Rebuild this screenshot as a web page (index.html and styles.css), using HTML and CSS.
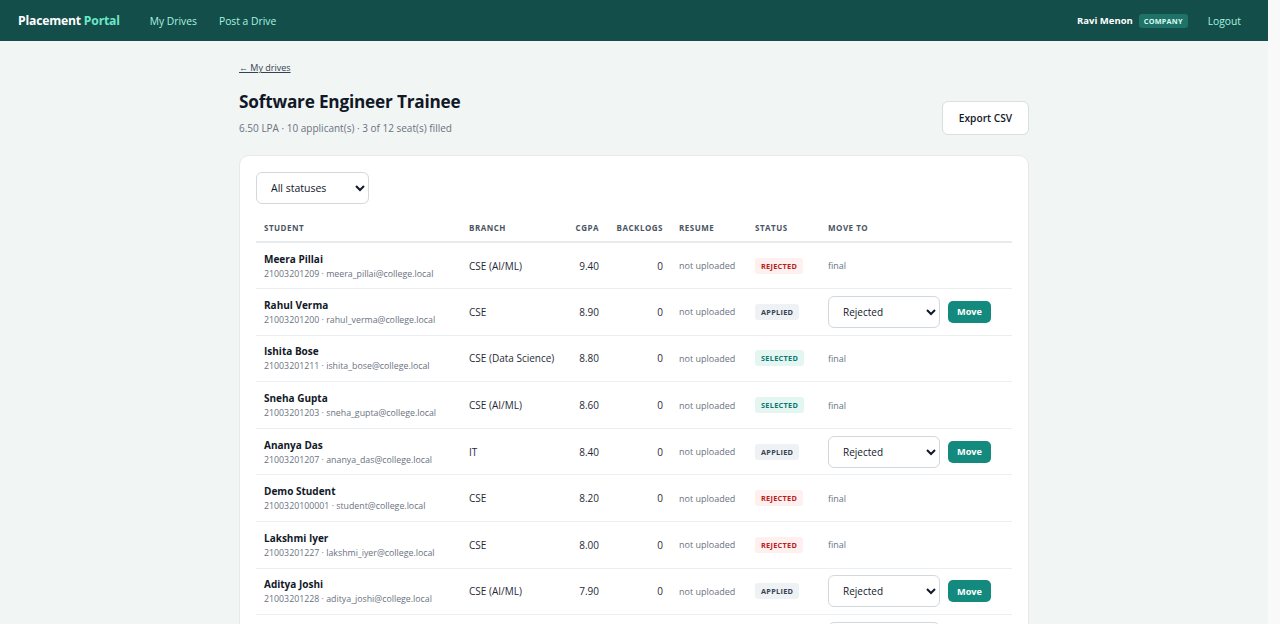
FILE: index.html
```html
<!DOCTYPE html>
<html lang="en">
<head>
<meta charset="utf-8">
<title>Applicants - Placement Portal</title>
<link rel="stylesheet" href="styles.css">
</head>
<body>
<header class="topbar">
  <div class="topbar-left">
    <a class="brand" href="#">Placement <span class="brand-accent">Portal</span></a>
    <nav class="nav">
      <a href="#">My Drives</a>
      <a href="#">Post a Drive</a>
    </nav>
  </div>
  <div class="topbar-right">
    <span class="user-name">Ravi Menon</span>
    <span class="role-badge">COMPANY</span>
    <a class="logout" href="#">Logout</a>
  </div>
</header>

<main class="page">
  <a class="back-link" href="#">← My drives</a>
  <div class="page-head">
    <div>
      <h1 class="title">Software Engineer Trainee</h1>
      <p class="meta">6.50 LPA · 10 applicant(s) · 3 of 12 seat(s) filled</p>
    </div>
    <button class="btn-outline">Export CSV</button>
  </div>

  <section class="card">
    <select class="filter">
      <option>All statuses</option>
    </select>

    <table class="applicants">
      <thead>
        <tr>
          <th class="col-student">Student</th>
          <th class="col-branch">Branch</th>
          <th class="num col-cgpa">CGPA</th>
          <th class="num col-back">Backlogs</th>
          <th class="col-resume">Resume</th>
          <th class="col-status">Status</th>
          <th class="col-move">Move to</th>
        </tr>
      </thead>
      <tbody>
        <tr>
          <td><div class="name">Meera Pillai</div><div class="sub">21003201209 · meera_pillai@college.local</div></td>
          <td>CSE (AI/ML)</td><td class="num">9.40</td><td class="num">0</td>
          <td class="muted">not uploaded</td>
          <td><span class="badge rejected">Rejected</span></td>
          <td class="muted">final</td>
        </tr>
        <tr>
          <td><div class="name">Rahul Verma</div><div class="sub">21003201200 · rahul_verma@college.local</div></td>
          <td>CSE</td><td class="num">8.90</td><td class="num">0</td>
          <td class="muted">not uploaded</td>
          <td><span class="badge applied">Applied</span></td>
          <td><div class="move"><select class="move-select"><option>Rejected</option></select><button class="btn-move">Move</button></div></td>
        </tr>
        <tr>
          <td><div class="name">Ishita Bose</div><div class="sub">21003201211 · ishita_bose@college.local</div></td>
          <td>CSE (Data Science)</td><td class="num">8.80</td><td class="num">0</td>
          <td class="muted">not uploaded</td>
          <td><span class="badge selected">Selected</span></td>
          <td class="muted">final</td>
        </tr>
        <tr>
          <td><div class="name">Sneha Gupta</div><div class="sub">21003201203 · sneha_gupta@college.local</div></td>
          <td>CSE (AI/ML)</td><td class="num">8.60</td><td class="num">0</td>
          <td class="muted">not uploaded</td>
          <td><span class="badge selected">Selected</span></td>
          <td class="muted">final</td>
        </tr>
        <tr>
          <td><div class="name">Ananya Das</div><div class="sub">21003201207 · ananya_das@college.local</div></td>
          <td>IT</td><td class="num">8.40</td><td class="num">0</td>
          <td class="muted">not uploaded</td>
          <td><span class="badge applied">Applied</span></td>
          <td><div class="move"><select class="move-select"><option>Rejected</option></select><button class="btn-move">Move</button></div></td>
        </tr>
        <tr>
          <td><div class="name">Demo Student</div><div class="sub">2100320100001 · student@college.local</div></td>
          <td>CSE</td><td class="num">8.20</td><td class="num">0</td>
          <td class="muted">not uploaded</td>
          <td><span class="badge rejected">Rejected</span></td>
          <td class="muted">final</td>
        </tr>
        <tr>
          <td><div class="name">Lakshmi Iyer</div><div class="sub">21003201227 · lakshmi_iyer@college.local</div></td>
          <td>CSE</td><td class="num">8.00</td><td class="num">0</td>
          <td class="muted">not uploaded</td>
          <td><span class="badge rejected">Rejected</span></td>
          <td class="muted">final</td>
        </tr>
        <tr>
          <td><div class="name">Aditya Joshi</div><div class="sub">21003201228 · aditya_joshi@college.local</div></td>
          <td>CSE (AI/ML)</td><td class="num">7.90</td><td class="num">0</td>
          <td class="muted">not uploaded</td>
          <td><span class="badge applied">Applied</span></td>
          <td><div class="move"><select class="move-select"><option>Rejected</option></select><button class="btn-move">Move</button></div></td>
        </tr>
        <tr>
          <td><div class="name">Karan Mehta</div><div class="sub">21003201215 · karan_mehta@college.local</div></td>
          <td>ECE</td><td class="num">7.60</td><td class="num">1</td>
          <td class="muted">not uploaded</td>
          <td><span class="badge applied">Applied</span></td>
          <td><div class="move"><select class="move-select"><option>Rejected</option></select><button class="btn-move">Move</button></div></td>
        </tr>
        <tr>
          <td><div class="name">Priya Nair</div><div class="sub">21003201219 · priya_nair@college.local</div></td>
          <td>IT</td><td class="num">7.20</td><td class="num">0</td>
          <td class="muted">not uploaded</td>
          <td><span class="badge rejected">Rejected</span></td>
          <td class="muted">final</td>
        </tr>
      </tbody>
    </table>
  </section>
</main>
</body>
</html>
```

FILE: styles.css
```css
* { box-sizing: border-box; }

html, body {
  margin: 0;
  padding: 0;
}

body {
  background: #f1f5f4;
  border-right: 12px solid #f9f9f9;
  color: #111827;
  font-family: "Open Sans", "Noto Sans", sans-serif;
  font-size: 10.5px;
}

a { color: inherit; text-decoration: none; }

.topbar {
  height: 41px;
  background: #134e4a;
  display: flex;
  align-items: center;
  justify-content: space-between;
  padding: 0 27px 0 18px;
}

.topbar-left {
  display: flex;
  align-items: center;
  gap: 30px;
}

.brand {
  color: #ffffff;
  font-weight: 700;
  font-size: 12.2px;
  letter-spacing: -0.2px;
}

.brand-accent { color: #6ee7c7; }

.nav {
  display: flex;
  gap: 22px;
}

.nav a {
  color: #a7f3e0;
  font-size: 10.3px;
}

.topbar-right {
  display: flex;
  align-items: center;
}

.user-name {
  color: #ffffff;
  font-weight: 700;
  font-size: 9.5px;
}

.role-badge {
  margin-left: 6px;
  background: #1f7268;
  color: #d7faf0;
  font-size: 7.3px;
  font-weight: 700;
  letter-spacing: 0.2px;
  padding: 2px 5px;
  border-radius: 3px;
}

.logout {
  margin-left: 20px;
  color: #a7f3e0;
  font-size: 10.3px;
}

.page {
  width: 790px;
  margin: 0 auto;
  padding: 19px 0 256px;
}

.back-link {
  display: inline-block;
  font-size: 9px;
  color: #374151;
  text-decoration: underline;
}

.page-head {
  display: flex;
  justify-content: space-between;
  align-items: flex-end;
  margin-top: 16px;
}

.title {
  margin: 0;
  font-size: 17.2px;
  font-weight: 700;
  color: #111827;
  letter-spacing: -0.2px;
}

.meta {
  margin: 8px 0 0;
  font-size: 10px;
  color: #6b7280;
}

.btn-outline {
  background: #ffffff;
  border: 1px solid #d9dee2;
  border-radius: 6px;
  height: 34px;
  width: 87px;
  padding: 0;
  font-family: inherit;
  font-size: 10.2px;
  font-weight: 600;
  color: #111827;
}

.card {
  margin-top: 20px;
  background: #ffffff;
  border: 1px solid #e5e9ec;
  border-radius: 10px;
  padding: 16px 16px 16px;
}

.filter {
  width: 113px;
  height: 32px;
  padding: 0 8px 0 10px;
  border: 1px solid #d3d8dd;
  border-radius: 6px;
  background: #ffffff;
  font-family: inherit;
  font-size: 10.5px;
  color: #111827;
}

.applicants {
  margin-top: 18px;
  width: 100%;
  table-layout: fixed;
  border-collapse: collapse;
}

.applicants th {
  text-align: left;
  font-size: 8px;
  font-weight: 700;
  letter-spacing: 0.5px;
  text-transform: uppercase;
  color: #4b5563;
  padding: 0 8px 8px;
  border-bottom: 2px solid #e8ebee;
  white-space: nowrap;
}

.applicants td {
  height: 46.6px;
  padding: 0 8px;
  border-bottom: 1px solid #eceff1;
  font-size: 10px;
  color: #1f2937;
  vertical-align: middle;
  white-space: nowrap;
}

.applicants .num { text-align: right; }

.col-student { width: 205px; }
.col-branch { width: 100px; }
.col-cgpa { width: 46px; }
.col-back { width: 64px; }
.col-resume { width: 76px; }
.col-status { width: 73px; }
.col-move { width: 192px; }

.name {
  font-weight: 700;
  font-size: 10px;
  color: #111827;
}

.sub {
  margin-top: 2px;
  font-size: 8.8px;
  color: #6b7280;
}

.applicants td.muted {
  color: #6b7280;
  font-size: 9px;
}

.badge {
  display: inline-block;
  font-size: 7.3px;
  font-weight: 700;
  letter-spacing: 0.3px;
  text-transform: uppercase;
  padding: 3px 6px;
  border-radius: 3px;
}

.badge.rejected { background: #fdf0ee; color: #b91c1c; }
.badge.applied { background: #eef2f4; color: #374151; }
.badge.selected { background: #e3f6f2; color: #0f766e; }

.move {
  display: flex;
  align-items: center;
  gap: 8px;
}

.move-select {
  width: 112px;
  height: 32px;
  padding: 0 6px 0 10px;
  border: 1px solid #d3d8dd;
  border-radius: 6px;
  background: #ffffff;
  font-family: inherit;
  font-size: 10px;
  color: #111827;
}

.btn-move {
  height: 22px;
  padding: 0 9px;
  background: #138a7d;
  color: #ffffff;
  border: none;
  border-radius: 5px;
  font-family: inherit;
  font-size: 9.2px;
  font-weight: 700;
}
```
